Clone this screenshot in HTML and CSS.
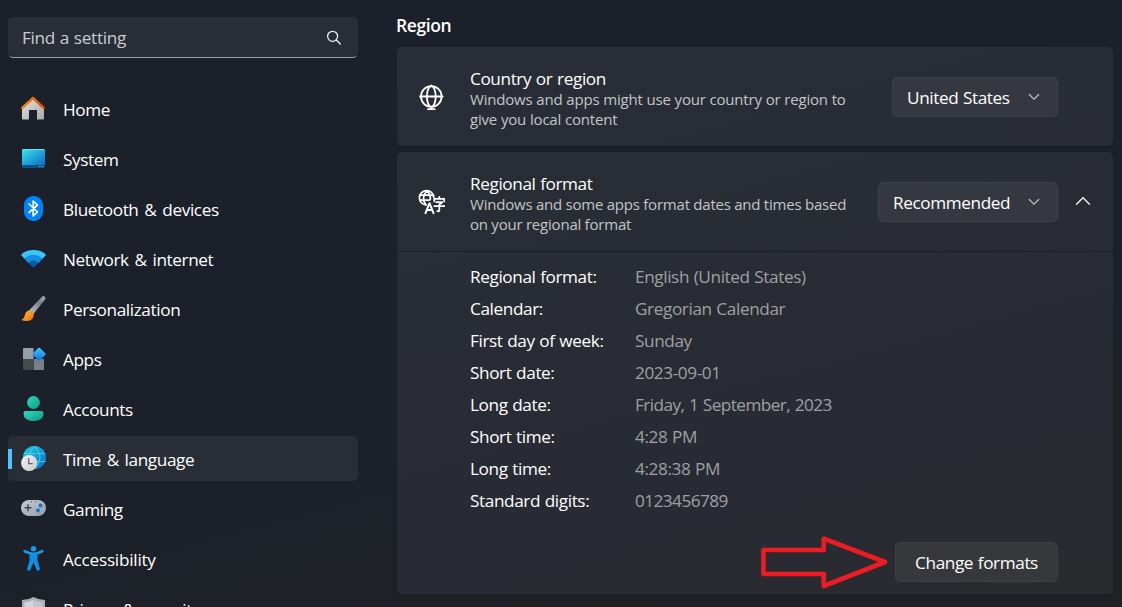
FILE: index.html
```
<!DOCTYPE html>
<html lang="en">
<head>
<meta charset="utf-8">
<title>Settings - Region</title>
<link rel="stylesheet" href="styles.css">
</head>
<body>
<div class="window">
  <aside class="sidebar">
    <div class="search">
      <span class="search-text">Find a setting</span>
      <svg class="search-icon" width="16" height="16" viewBox="0 0 16 16" fill="none" stroke="#f0f0f1" stroke-width="1.3" stroke-linecap="round"><circle cx="6.6" cy="6.3" r="5"/><path d="M10.3 10 14.3 14"/></svg>
    </div>
    <nav class="nav">
      <a class="item"><svg class="icon" viewBox="0 0 26 26"><defs><linearGradient id="hw" x1="0" y1="0" x2="1" y2="1"><stop stop-color="#e2e2e2"/><stop offset="1" stop-color="#a8a8a8"/></linearGradient><linearGradient id="hr"><stop stop-color="#f08a17"/><stop offset="1" stop-color="#dc5205"/></linearGradient></defs><path d="M2 12 13 3l11 9v11.5q0 1-1 1h-6V15.500q0-.5-.5-.5h-7q-.5 0-.5.5v9H3q-1 0-1-1z" fill="url(#hw)"/><path d="M2.300 12.800 13 3 23.700 12.800" fill="none" stroke="url(#hr)" stroke-width="2.500" stroke-linecap="round" stroke-linejoin="round"/></svg><span>Home</span></a>
      <a class="item"><svg class="icon" viewBox="0 0 26 26"><defs><linearGradient id="sy" x1="0" y1="0" x2="1" y2="1"><stop stop-color="#3be4ea"/><stop offset="1" stop-color="#0b6cc8"/></linearGradient></defs><rect x="2" y="4" width="23" height="19" rx="1" fill="#08547e"/><path d="M2 20V5q0-1 1-1h21q1 0 1 1v15z" fill="url(#sy)"/><path d="M3 4.500h21" stroke="#65e5ed"/><path d="M19.200 21.500h1M21.500 21.500h1" stroke="#a6d9eb"/></svg><span>System</span></a>
      <a class="item amp"><svg class="icon" viewBox="0 0 26 26"><rect x="4" y="1" width="19" height="25" rx="9" fill="#0084fb"/><path d="m9 9 8.500 8-4.300 4V6l4.300 4L9 17.500" fill="none" stroke="#fff" stroke-width="1.700" stroke-linejoin="round" stroke-linecap="round"/></svg><span>Bluetooth &amp; devices</span></a>
      <a class="item amp"><svg class="icon" viewBox="0 0 26 26"><path d="M1.500 10.500Q0.800 9.700 1.700 9Q6 5 13.500 5T25.300 9q.9.700.2 1.500l-3 3.200h-18z" fill="#38c7f5"/><path d="M4.500 13.700Q8 9.800 13.500 9.800t9 3.900l-4 4.500h-10z" fill="#168fe0"/><path d="M8.300 17.800q5.200-5 10.400 0L14.300 22q-.8.800-1.600 0z" fill="#0759ac"/></svg><span>Network &amp; internet</span></a>
      <a class="item"><svg class="icon" viewBox="0 0 26 26"><defs><linearGradient id="br" x1="1" y1="0" x2="0" y2="1"><stop stop-color="#a4abb3"/><stop offset=".35" stop-color="#78818b"/><stop offset="1" stop-color="#c1c5ca"/></linearGradient><linearGradient id="bo" x1="0" y1="0" x2="1" y2="1"><stop stop-color="#ffc33a"/><stop offset="1" stop-color="#ee6b0c"/></linearGradient></defs><path d="M9 15.500 21.700 2q1.500-1.400 3-.6 1.300 1.200.3 3.100L13 19.500z" fill="url(#br)"/><path d="M1.500 25q3-2 3.500-5 .8-4.500 4.800-4.500t4 4.200Q13.200 26 6.500 26q-3 0-5-1z" fill="url(#bo)"/></svg><span>Personalization</span></a>
      <a class="item"><svg class="icon" viewBox="0 0 26 26"><defs><linearGradient id="ap" x1="0" y1="0" x2="1" y2="1"><stop stop-color="#46c7fa"/><stop offset="1" stop-color="#0871dc"/></linearGradient></defs><path d="M3 14V4q0-1 1-1h9.500v11z" fill="#969ea7"/><path d="M3 14h11v11H4q-1 0-1-1z" fill="#46494d"/><path d="M14 14h10v10q0 1-1 1h-9z" fill="#797f87"/><rect x="14.100" y="4.100" width="10" height="10" rx="1.200" transform="rotate(45 19.100 9.100)" fill="url(#ap)"/></svg><span>Apps</span></a>
      <a class="item"><svg class="icon" viewBox="0 0 26 26"><defs><linearGradient id="ac" x1="0" y1="0" x2="1" y2="1"><stop stop-color="#2bd8c0"/><stop offset="1" stop-color="#119b86"/></linearGradient></defs><circle cx="13.500" cy="7.500" r="6.400" fill="url(#ac)"/><path d="M5.500 16h16q2 0 2 2 0 8-10 8t-10-8q0-2 2-2z" fill="url(#ac)"/></svg><span>Accounts</span></a>
      <a class="item active amp"><svg class="icon" viewBox="0 0 26 26"><defs><linearGradient id="gl" x1="0" y1="0" x2="1" y2="1"><stop stop-color="#21d2dc"/><stop offset="1" stop-color="#096bce"/></linearGradient><linearGradient id="ck" x1="0" y1="0" x2="1" y2="1"><stop stop-color="#f4f4f4"/><stop offset="1" stop-color="#c7c8ca"/></linearGradient></defs><circle cx="14.500" cy="12.500" r="11.500" fill="url(#gl)"/><path d="M4 8.500h21M3 16.500h23M14.500 1q-11 11.500 0 23M14.500 1q11 11.500 0 23" fill="none" stroke="#5ee0f1" stroke-width=".9" opacity=".7"/><circle cx="9.200" cy="18" r="8.100" fill="url(#ck)"/><path d="M8.700 13.200v5.500h4" fill="none" stroke="#65676a" stroke-width="1.300"/></svg><span>Time &amp; language</span></a>
      <a class="item"><svg class="icon" viewBox="0 0 26 26"><defs><linearGradient id="ga" x1="0" y1="0" x2="1" y2="1"><stop stop-color="#c8ced5"/><stop offset="1" stop-color="#939ba5"/></linearGradient></defs><rect x="1" y="5" width="25" height="16" rx="8" fill="url(#ga)"/><path d="M8 9.700v6M5 12.700h6" stroke="#3d4349" stroke-width="1.400" stroke-linecap="round"/><circle cx="20.500" cy="10.500" r="1.900" fill="#0677d8"/><circle cx="18" cy="15.500" r="1.900" fill="#0677d8"/><circle cx="11.500" cy="6.700" r=".6" fill="#444b52"/><circle cx="15.500" cy="6.700" r=".6" fill="#444b52"/></svg><span>Gaming</span></a>
      <a class="item"><svg class="icon" viewBox="0 0 26 26"><circle cx="13.500" cy="3.700" r="2.700" fill="#179bec"/><path d="M4.700 6.200 9 8q4.500 1.500 9 0l4.300-1.800" fill="none" stroke="#179bec" stroke-width="2.600" stroke-linecap="round"/><path d="M9.500 8.200h8v7.100l2.400 8.400q.3 1.700-1.400 2-1.500.2-2-1.200l-3-7.500-3 7.500q-.5 1.500-2.100 1.200-1.500-.4-1.200-2l2.300-8.400z" fill="#108ee1"/></svg><span class="loose">Accessibility</span></a>
      <a class="item amp"><svg class="icon" viewBox="0 0 26 26"><path d="M2 5q6 0 11.500-3Q19 5 25 5v8q0 9-11.500 13Q2 22 2 13z" fill="#a9afb6"/><path d="M4.500 7.300q4.500 0 9-2.500V23q-9-4-9-10z" fill="#d2d5d9"/><path d="M22.500 7.300q-4.500 0-9-2.500V23q9-4 9-10z" fill="#c0c5ca"/></svg><span>Privacy &amp; security</span></a>
    </nav>
  </aside>
  <main class="main">
    <h1 class="heading">Region</h1>
    <section class="card country">
      <svg class="card-icon" viewBox="0 0 28 28" fill="none" stroke="#fff" stroke-width="1.800" stroke-linecap="round"><circle cx="14.300" cy="13.500" r="10.300"/><ellipse cx="14.300" cy="13.500" rx="4.400" ry="10.300"/><path d="M3 13.500h22.600M14.300 2.300v1M14.300 24v2.200M11 26.200h6.600"/></svg>
      <div class="copy"><h2>Country or region</h2><p>Windows and apps might use your country or region to<br>give you local content</p></div>
      <button class="button select us"><span>United States</span><svg width="12" height="8" viewBox="0 0 12 8" fill="none" stroke="#bfc0c3" stroke-width="1.200" stroke-linecap="round"><path d="m1.300 1.500 4.700 4.700 4.700-4.700"/></svg></button>
    </section>
    <section class="card format">
      <header class="format-head">
        <svg class="card-icon" viewBox="0 0 28 28" fill="none" stroke="#fff" stroke-width="1.700" stroke-linecap="round" stroke-linejoin="round"><path d="M9.300 17A7.200 7.200 0 1 1 16.800 9.700"/><path d="M8.800 16.700q-5-6.800 1-14 4 3.400 3.500 9M3 7.200h13.500M3 12.200h9"/><path d="m8.500 25.200 4-10 4 10M9.800 21.900h5.400" stroke-width="2"/><path d="M17.300 13.400v-2.500h10v2.500M22.300 9v1.900M19.300 14.200h6l-3 2.300v5.700q0 1.300-2 1M17.300 18.100h10.200" stroke-width="1.800"/></svg>
        <div class="copy"><h2>Regional format</h2><p class="p-format">Windows and some apps format dates and times based<br>on your regional format</p></div>
        <button class="button select rec"><span>Recommended</span><svg width="12" height="8" viewBox="0 0 12 8" fill="none" stroke="#bfc0c3" stroke-width="1.200" stroke-linecap="round"><path d="m1.300 1.500 4.700 4.700 4.700-4.700"/></svg></button>
        <svg class="collapse" width="16" height="10" viewBox="0 0 16 10" fill="none" stroke="#f6f6f6" stroke-width="1.300" stroke-linecap="round"><path d="m1.500 8.300 6.500-6.600 6.500 6.600"/></svg>
      </header>
      <dl class="details">
        <dt>Regional format:</dt><dd>English (United States)</dd>
        <dt>Calendar:</dt><dd>Gregorian Calendar</dd>
        <dt>First day of week:</dt><dd>Sunday</dd>
        <dt>Short date:</dt><dd>2023-09-01</dd>
        <dt>Long date:</dt><dd class="tight">Friday, 1 September, 2023</dd>
        <dt>Short time:</dt><dd>4:28 PM</dd>
        <dt>Long time:</dt><dd>4:28:38 PM</dd>
        <dt>Standard digits:</dt><dd class="tight">0123456789</dd>
      </dl>
      <footer class="actions">
        <svg class="arrow" width="128" height="54" viewBox="0 0 128 54" fill="none" stroke="#ed1c24" stroke-width="4.600" stroke-linejoin="round"><path d="M3.500 15h60.300V3.700L125 27 63.800 51V39H3.500z"/></svg>
        <button class="button change">Change formats</button>
      </footer>
    </section>
  </main>
</div>
</body>
</html>
```
FILE: styles.css
```
* { box-sizing: border-box; }
body {
  margin: 0;
  height: 607px;
  overflow: hidden;
  font-family: "Open Sans", "Noto Sans", sans-serif;
  font-size: 17.2px;
  letter-spacing: -0.4px;
  word-spacing: 0.6px;
  color: #fff;
  background: #1b202a;
}
.window {
  display: flex;
  height: 607px;
  overflow: hidden;
  background: linear-gradient(165deg, #1b202b 0%, #1b202a 60%, #202125 84%, #202124 100%);
}
.sidebar { width: 397px; flex: none; padding: 17px 39px 0 8px; }
.search {
  display: flex;
  align-items: center;
  justify-content: space-between;
  height: 41px;
  padding: 0 15px 0 13px;
  border: 1px solid #2b303a;
  border-bottom-color: #9b9da2;
  border-radius: 5px;
  background: #282d37;
  color: #cbcccf;
}
.search-text { line-height: 24px; letter-spacing: -0.3px; }
.nav { display: flex; flex-direction: column; gap: 5px; padding-top: 28px; }
.item {
  display: flex;
  align-items: center;
  flex: none;
  height: 45px;
  padding: 0 12px;
  gap: 17px;
  border-radius: 5px;
  line-height: 24px;
}
.item span { padding-top: 2px; white-space: nowrap; }
.item .loose { letter-spacing: -.25px; }
.amp { word-spacing: 1.8px; }
.icon { width: 26px; height: 26px; flex: none; margin-bottom: 1px; }
.active {
  background: linear-gradient(#4cc2ff, #4cc2ff) 0 50% / 4px 20px no-repeat, #292d35;
}
.main { width: 716px; flex: none; padding-top: 13px; }
.heading { margin: 0 0 10px -1px; font-size: 17.5px; line-height: 24px; font-weight: 600; letter-spacing: -.4px; }
.card {
  border-radius: 5px;
  background: linear-gradient(165deg, #292d37, #292c35);
  box-shadow: 0 0 0 1px #1a1e27;
}
.country, .format-head { display: flex; align-items: center; height: 99px; padding: 0 55px 0 20px; }
.country { margin-bottom: 6px; }
.format { height: 442px; background: linear-gradient(165deg, #292d36 0%, #292b34 72%, #2a2b30 88%, #2b2b2f 100%); }
.format-head { height: 100px; padding-right: 22px; border-bottom: 1px solid #1d2028; }
.card-icon { width: 28px; height: 28px; flex: none; }
.copy { flex: 1; padding-left: 25px; padding-top: 4px; white-space: nowrap; }
.copy h2 { margin: 0; font-size: 17.2px; font-weight: 400; line-height: 22px; }
.copy p { margin: -1px 0 0; font-size: 15px; line-height: 20px; letter-spacing: -.2px; word-spacing: .2px; color: #c4c5c8; }
.copy .p-format { word-spacing: -.2px; }
.button {
  display: flex;
  align-items: center;
  height: 40px;
  border: 1px solid #3d4048;
  border-radius: 5px;
  background: #363841;
  color: #fff;
  font: inherit;
  letter-spacing: inherit;
  word-spacing: inherit;
  white-space: nowrap;
}
.select { justify-content: space-between; padding: 1px 17px 0 14px; }
.us { width: 166px; }
.rec { width: 180px; margin-right: 17px; }
.collapse { flex: none; margin-bottom: 2px; }
.details {
  display: grid;
  grid-template-columns: 165px 1fr;
  grid-auto-rows: 32px;
  align-items: center;
  margin: 0;
  padding: 8px 0 0 73px;
}
.details dd { margin: 0; color: #9fa0a4; }
.details .tight { letter-spacing: -.55px; }
.actions { display: flex; align-items: flex-start; justify-content: flex-end; gap: 7px; padding: 19px 55px 0 0; }
.change { width: 163px; justify-content: center; margin-top: 7px; background: #37383c; border-color: #3e3f43; }
.arrow { flex: none; }
```
